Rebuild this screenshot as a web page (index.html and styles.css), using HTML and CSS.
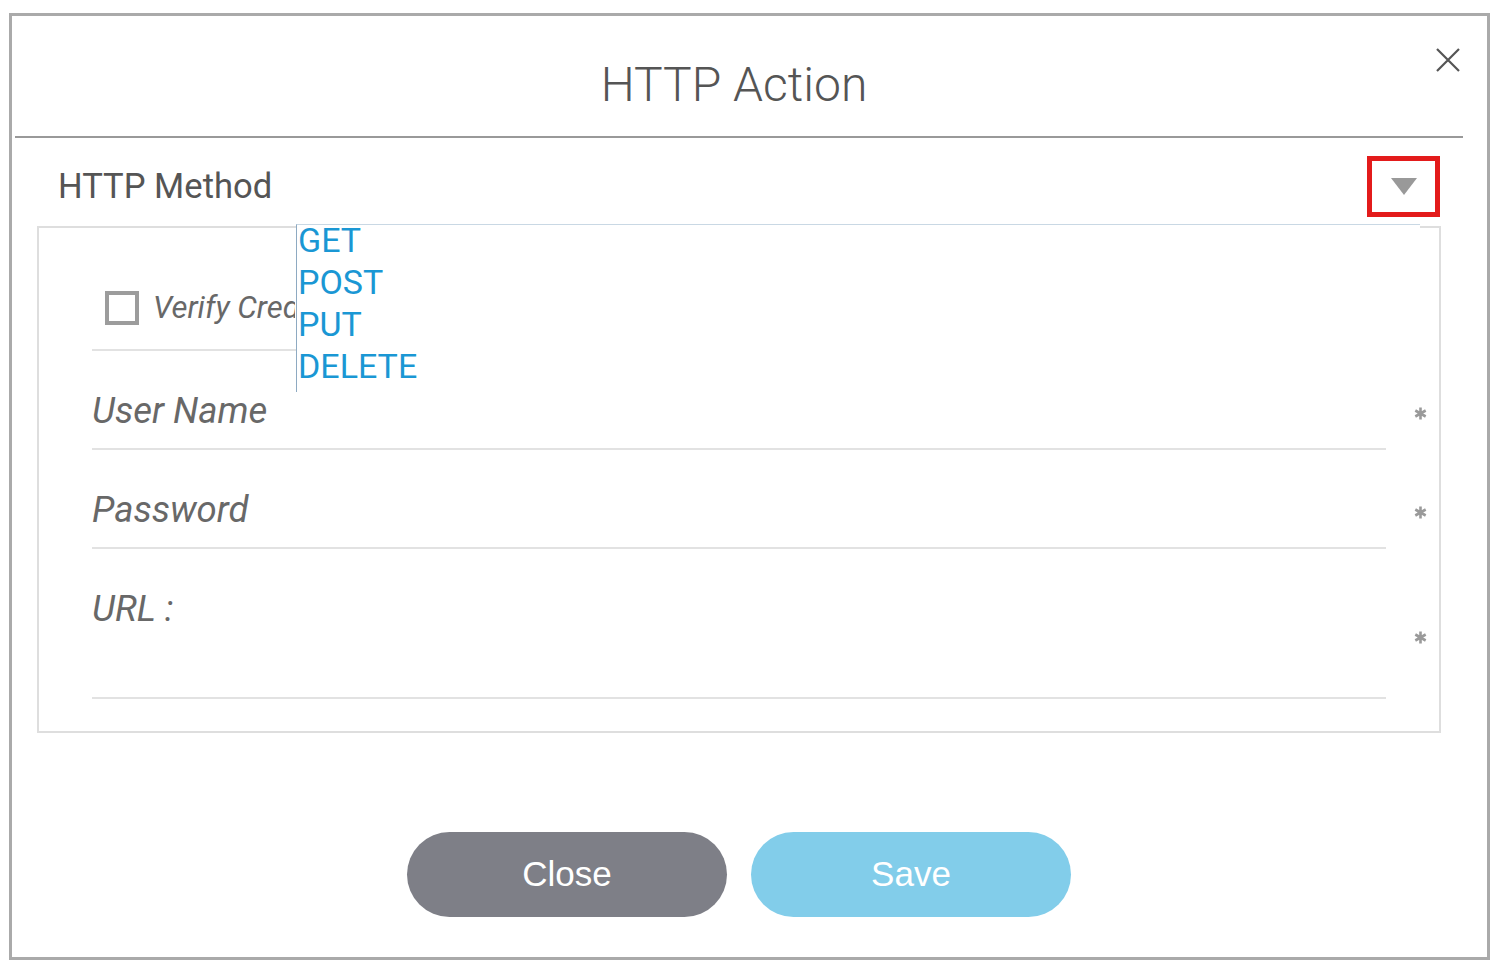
FILE: index.html
```html
<!DOCTYPE html>
<html lang="en">
<head>
<meta charset="utf-8">
<title>HTTP Action</title>
<link rel="stylesheet" href="styles.css">
</head>
<body>
<div class="modal">
  <div class="header">
    <h1 class="title">HTTP Action</h1>
    <svg class="close-x" width="24" height="24" viewBox="0 0 24 24"><path d="M1 1 L23 23 M23 1 L1 23" stroke="#555" stroke-width="2.2" fill="none"/></svg>
  </div>
  <div class="method-row">
    <div class="method-label">HTTP Method</div>
    <div class="caret-box"><svg width="26" height="17" viewBox="0 0 26 17"><path d="M0 0 H26 L13 17 Z" fill="#999"/></svg></div>
  </div>
  <ul class="method-list">
    <li>GET</li>
    <li>POST</li>
    <li>PUT</li>
    <li>DELETE</li>
  </ul>
  <div class="panel">
    <div class="row">
      <div class="field check-field">
        <span class="checkbox"></span>
        <span class="label check-label">Verify Credentials</span>
      </div>
    </div>
    <div class="row">
      <div class="field"><span class="label">User Name</span></div>
      <svg class="req" width="13" height="13" viewBox="0 0 13 13"><path d="M6.5 0.5 V12.5 M1.3 3.5 L11.7 9.5 M11.7 3.5 L1.3 9.5" stroke="#9a9a9a" stroke-width="2.6" fill="none"/></svg>
    </div>
    <div class="row">
      <div class="field"><span class="label">Password</span></div>
      <svg class="req" width="13" height="13" viewBox="0 0 13 13"><path d="M6.5 0.5 V12.5 M1.3 3.5 L11.7 9.5 M11.7 3.5 L1.3 9.5" stroke="#9a9a9a" stroke-width="2.6" fill="none"/></svg>
    </div>
    <div class="row">
      <div class="field url-field"><span class="label">URL :</span></div>
      <svg class="req req-url" width="13" height="13" viewBox="0 0 13 13"><path d="M6.5 0.5 V12.5 M1.3 3.5 L11.7 9.5 M11.7 3.5 L1.3 9.5" stroke="#9a9a9a" stroke-width="2.6" fill="none"/></svg>
    </div>
  </div>
  <div class="buttons">
    <button class="btn btn-close">Close</button>
    <button class="btn btn-save">Save</button>
  </div>
</div>
</body>
</html>
```
FILE: styles.css
```css
* { box-sizing: border-box; }
html, body { margin: 0; padding: 0; background: #fff; }
body { font-family: Roboto, "Liberation Sans", Arial, sans-serif; }

.modal {
  position: relative;
  margin: 13px 7px 11px 9px;
  height: 947px;
  border: 3px solid #aaa;
  background: #fff;
}

.header {
  position: relative;
  height: 122px;
  margin: 0 24px 0 3px;
  padding: 45px 10px 0 0;
  border-bottom: 2px solid #999;
}
.title {
  margin: 0;
  font-family: Roboto, sans-serif;
  font-weight: 300;
  font-size: 48px;
  line-height: 48px;
  color: #555;
  text-align: center;
}
.close-x {
  position: absolute;
  top: 32px;
  right: 3px;
}

.method-row {
  display: flex;
  justify-content: space-between;
  align-items: flex-start;
  height: 88px;
  padding: 0 47px 0 46px;
}
.method-label {
  margin-top: 31px;
  font-size: 34.6px;
  line-height: 34px;
  color: #555;
}
.caret-box {
  margin-top: 18px;
  width: 73px;
  height: 61px;
  border: 5px solid #e31b1b;
  display: flex;
  align-items: center;
  justify-content: center;
}

.method-list {
  position: absolute;
  z-index: 2;
  top: 208px;
  left: 284px;
  width: 1124px;
  height: 168px;
  margin: 0;
  padding: 0 0 0 1px;
  list-style: none;
  background: #fff;
  border-top: 1px solid #c9d8e4;
  border-left: 1px solid #8eaac2;
}
.method-list li {
  height: 42px;
  line-height: 30px;
  font-size: 34px;
  color: #1a97d4;
}

.panel {
  margin-left: 25px;
  width: 1404px;
  height: 507px;
  border: 2px solid #dedede;
  padding-bottom: 32px;
}
.row {
  display: flex;
  align-items: flex-start;
  margin-left: 53px;
}
.field {
  width: 1294px;
  height: 99px;
  padding-top: 42px;
  border-bottom: 2px solid #e2e2e2;
}
.check-field {
  height: 123px;
  padding: 63px 0 0 13px;
  display: flex;
  align-items: flex-start;
}
.url-field { height: 150px; }
.label {
  font-style: italic;
  font-size: 36.5px;
  line-height: 35px;
  color: #686868;
  display: block;
}
.checkbox {
  display: block;
  width: 34px;
  height: 34px;
  border: 4px solid #9c9c9c;
  flex: none;
}
.check-label {
  width: 142px;
  overflow: hidden;
  font-size: 31px;
  line-height: 34px;
  margin-left: 14px;
  white-space: nowrap;
}
.req {
  flex: none;
  margin-left: 28px;
  margin-top: 56px;
}
.req-url { margin-top: 82px; }

.buttons {
  display: flex;
  justify-content: center;
  gap: 24px;
  margin-top: 99px;
  padding-right: 21px;
}
.btn {
  width: 320px;
  height: 85px;
  border: none;
  border-radius: 43px;
  font-family: "Liberation Sans", Arial, sans-serif;
  font-size: 35px;
  line-height: 35px;
  color: #fff;
  padding: 0 0 3px 0;
}
.btn-close { background: #7e7f87; }
.btn-save { background: #82cdea; }
```
